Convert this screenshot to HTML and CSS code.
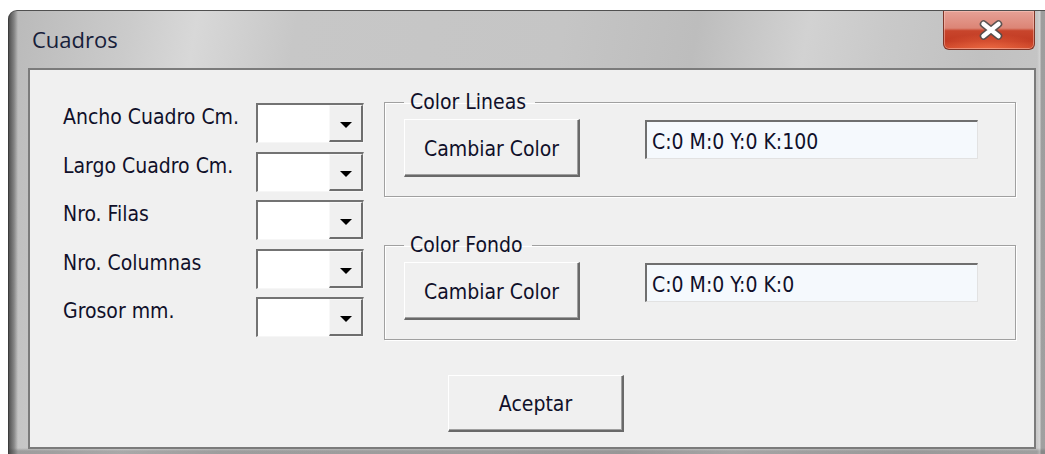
FILE: index.html
```html
<!DOCTYPE html>
<html lang="es">
<head>
<meta charset="utf-8">
<title>Cuadros</title>
<link rel="stylesheet" href="styles.css">
</head>
<body>
<div class="window">
  <div class="titlebar">
    <span class="title">Cuadros</span>
    <button class="close" aria-label="Cerrar">
      <svg width="24" height="20" viewBox="0 0 24 20">
        <path d="M4.5 4 L19.5 16 M19.5 4 L4.5 16" stroke="#4e4e4e" stroke-width="7.5" stroke-linecap="round" fill="none" opacity="0.9"/>
        <path d="M4.5 4 L19.5 16 M19.5 4 L4.5 16" stroke="#ffffff" stroke-width="4.5" stroke-linecap="round" fill="none"/>
      </svg>
    </button>
  </div>
  <div class="client">
    <div class="main">
      <div class="fields">
        <label class="field-label">Ancho Cuadro Cm.</label>
        <div class="combo"><span class="combo-value"></span><span class="combo-button"><span class="arrow"></span></span></div>
        <label class="field-label">Largo Cuadro Cm.</label>
        <div class="combo"><span class="combo-value"></span><span class="combo-button"><span class="arrow"></span></span></div>
        <label class="field-label">Nro. Filas</label>
        <div class="combo"><span class="combo-value"></span><span class="combo-button"><span class="arrow"></span></span></div>
        <label class="field-label">Nro. Columnas</label>
        <div class="combo"><span class="combo-value"></span><span class="combo-button"><span class="arrow"></span></span></div>
        <label class="field-label">Grosor mm.</label>
        <div class="combo"><span class="combo-value"></span><span class="combo-button"><span class="arrow"></span></span></div>
      </div>
      <div class="groups">
        <fieldset class="group">
          <legend>Color Lineas</legend>
          <div class="group-row">
            <button class="btn">Cambiar Color</button>
            <div class="readout">C:0 M:0 Y:0 K:100</div>
          </div>
        </fieldset>
        <fieldset class="group">
          <legend>Color Fondo</legend>
          <div class="group-row">
            <button class="btn">Cambiar Color</button>
            <div class="readout">C:0 M:0 Y:0 K:0</div>
          </div>
        </fieldset>
      </div>
    </div>
    <div class="actions">
      <button class="btn btn-ok">Aceptar</button>
    </div>
  </div>
</div>
</body>
</html>
```

FILE: styles.css
```css
html, body {
  margin: 0;
  background: #ffffff;
}

body {
  width: 1045px;
  height: 454px;
  overflow: hidden;
  font-family: "DejaVu Sans Condensed", "DejaVu Sans", sans-serif;
  font-stretch: condensed;
  font-size: 21px;
  color: #10102a;
}

/* Aero-style window frame */
.window {
  box-sizing: border-box;
  height: 444px;
  margin: 10px 0 0 8px;
  padding: 0 9px 0 19px;
  border-top: 1px solid #505050;
  border-left: 1px solid #3c3c3c;
  border-radius: 9px 0 0 0;
  background:
    linear-gradient(90deg, rgba(55, 55, 55, 0.8) 0, rgba(85, 85, 85, 0.55) 5px, rgba(120, 120, 120, 0) 9px),
    linear-gradient(270deg, rgba(110, 110, 110, 0.45) 0, rgba(110, 110, 110, 0.45) 4px, rgba(255, 255, 255, 0.25) 5px, rgba(255, 255, 255, 0) 8px),
    linear-gradient(180deg, rgba(0, 0, 0, 0) 0, rgba(0, 0, 0, 0) 437px, rgba(80, 80, 80, 0.35) 440px),
    linear-gradient(100deg, #b9b9b9 0%, #cbcbcb 11%, #d8d8d8 17%, #c7c7c7 26%, #c5c5c5 50%, #bdbdbd 62%, #d2d2d2 72%, #c9c9c9 79%, #c1c1c1 88%, #c9c9c9 100%);
}

.titlebar {
  height: 57px;
  display: flex;
  justify-content: space-between;
  align-items: flex-start;
}

.title {
  font-family: "Open Sans", "Noto Sans", sans-serif;
  font-stretch: normal;
  font-size: 22px;
  line-height: 30px;
  margin: 13px 0 0 4px;
  color: #16203a;
}

.close {
  width: 92px;
  height: 39px;
  margin: 0 1px 0 0;
  padding: 0 0 0 4px;
  display: flex;
  align-items: center;
  justify-content: center;
  border: 1px solid #7e3528;
  border-top: none;
  border-radius: 0 0 6px 6px;
  background:
    radial-gradient(ellipse 60% 40% at 50% 100%, rgba(240, 110, 70, 0.8), rgba(240, 110, 70, 0) 100%),
    linear-gradient(180deg, #e6a196 0%, #dc8576 45%, #c8452c 52%, #c23a22 80%, #d04a2c 100%);
  box-shadow: inset 0 0 0 1px rgba(255, 210, 200, 0.45);
}

/* Dialog client area */
.client {
  box-sizing: border-box;
  height: 381px;
  border: 2px solid #7b7b7b;
  background: #f0f0f0;
  padding: 20px 18px 0 33px;
}

.main {
  display: flex;
  gap: 20px;
}

.fields {
  display: grid;
  grid-template-columns: 193px 108px;
  row-gap: 8.5px;
  margin-top: 13px;
  align-content: start;
}

.field-label {
  line-height: 24px;
  padding-top: 2px;
  white-space: nowrap;
}

.combo {
  box-sizing: border-box;
  height: 40px;
  display: flex;
  background: #ffffff;
  border-style: solid;
  border-width: 2px 1px 1px 2px;
  border-color: #737373 #f6f6f6 #f6f6f6 #737373;
}

.combo-value {
  flex: 1;
}

.combo-button {
  box-sizing: border-box;
  width: 34px;
  display: flex;
  align-items: center;
  justify-content: center;
  background: #f0f0f0;
  border-style: solid;
  border-width: 1px 2px 2px 1px;
  border-color: #f8f8f8 #6e6e6e #6e6e6e #f8f8f8;
}

.arrow {
  width: 0;
  height: 0;
  margin-top: 4px;
  border-left: 6px solid transparent;
  border-right: 6px solid transparent;
  border-top: 6px solid #000000;
}

.groups {
  flex: 1;
  display: flex;
  flex-direction: column;
  gap: 36px;
}

.group {
  margin: 0;
  min-width: 0;
  padding: 5px 18px 19px 19px;
  border: 1px solid #a0a0a0;
  box-shadow: inset 1px 1px 0 #ffffff, 1px 1px 0 #ffffff;
}

.group legend {
  padding: 0 9px 0 6px;
  line-height: 24px;
}

.group-row {
  display: flex;
  align-items: flex-start;
  gap: 65px;
}

.btn {
  box-sizing: border-box;
  width: 176px;
  height: 58px;
  padding: 2px 0 0;
  font: inherit;
  font-stretch: condensed;
  line-height: 24px;
  color: inherit;
  background: #f0f0f0;
  border-style: solid;
  border-width: 1px 2px 2px 1px;
  border-color: #ffffff #696969 #696969 #ffffff;
  box-shadow: inset -1px -1px 0 #a0a0a0;
}

.readout {
  box-sizing: border-box;
  width: 333px;
  height: 39px;
  margin-top: 1px;
  padding: 8px 5px 0;
  line-height: 24px;
  white-space: nowrap;
  background: #f5f9fd;
  border-style: solid;
  border-width: 2px 1px 1px 2px;
  border-color: #6f6f6f #e2e2e2 #e2e2e2 #6f6f6f;
}

.actions {
  margin-top: 35px;
  padding-left: 385px;
}

.btn-ok {
  height: 57px;
}
```
